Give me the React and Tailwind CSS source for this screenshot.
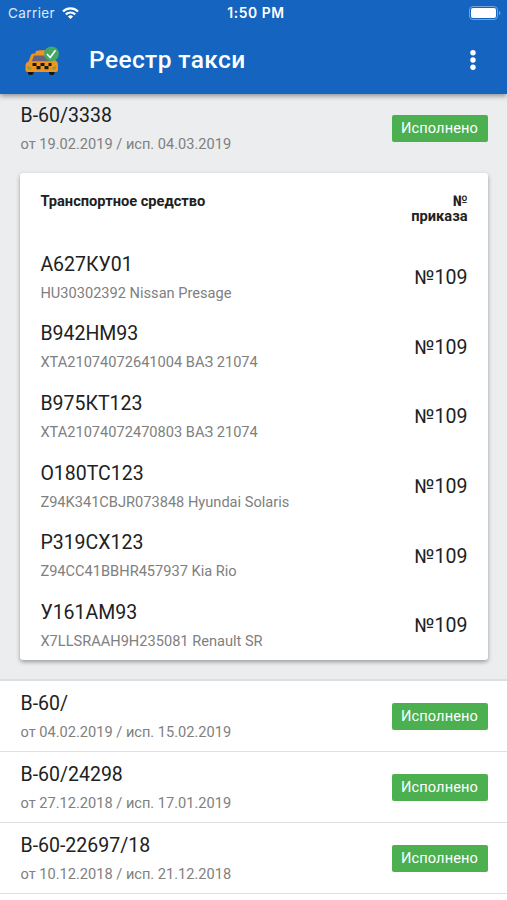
const vehicles = [
  ["А627КУ01", "HU30302392 Nissan Presage"],
  ["В942НМ93", "XTA21074072641004 ВАЗ 21074"],
  ["В975КТ123", "XTA21074072470803 ВАЗ 21074"],
  ["О180ТС123", "Z94K341CBJR073848 Hyundai Solaris"],
  ["Р319СХ123", "Z94CC41BBHR457937 Kia Rio"],
  ["У161АМ93", "X7LLSRAAH9H235081 Renault SR"],
];

const requests = [
  ["В-60/", "от 04.02.2019 / исп. 15.02.2019"],
  ["В-60/24298", "от 27.12.2018 / исп. 17.01.2019"],
  ["В-60-22697/18", "от 10.12.2018 / исп. 21.12.2018"],
];

function TaxiLogo() {
  return (
    <svg className="h-[30px] w-[36px]" viewBox="0 0 36 30">
      <path d="M3 23h5.500v4q0 2-2 2H5q-2 0-2-2zM24 23h5.500v4q0 2-2 2H26q-2 0-2-2z" fill="#151515" />
      <path d="M10.500 7.500V6q0-1 1-1l3-.8h5l3 .8q1 0 1 1v1.500l4 1 3 6q2.500 1 2.500 4v5.500q0 2-2 2H2.500q-2 0-2-2v-4.500q0-3 3-4l2.500-6.500q.5-1.500 2-1.500z" fill="#ef9420" />
      <path d="M9 9.500h15l3 5.800H6.800z" fill="#66647a" />
      <path d="M7.500 17h4v3h-4zm8 0h4v3h-4zm8 0h3v3h-3zM11.500 20h4v3.200h-4zm8 0h4v3.200h-4z" fill="#191817" />
      <path d="M2.500 20l4 1.500v2H3.500q-1.500 0-1-3.500zM31 20l-4 1.500v2h3q1.500 0 1-3.500z" fill="#8aa040" />
      <circle cx="26.500" cy="7.800" r="7.400" fill="#43a866" />
      <path d="M22 8l3.200 3.500 5.300-7.200" fill="none" stroke="#fff" strokeWidth="1.600" />
    </svg>
  );
}

function Badge() {
  return (
    <span className="flex h-[27px] w-24 items-center justify-center rounded-[2px] bg-[#4caf50] pt-px text-[14.600px] tracking-[0.1px] text-white">
      Исполнено
    </span>
  );
}

function RequestRow({ title, dates }) {
  return (
    <div className="flex h-full items-center justify-between pr-[19.500px] pl-[20.500px]">
      <div className="pt-[3px]">
        <div className="text-[19.500px] leading-7 text-[#212121]">{title}</div>
        <div className="text-[14.600px] leading-7 text-[#808080]">{dates}</div>
      </div>
      <Badge />
    </div>
  );
}

export default function App() {
  return (
    <div className="flex h-[900px] w-[507px] flex-col overflow-hidden bg-white font-[Roboto,sans-serif]">
      <header className="relative z-10 h-[94px] shrink-0 bg-[#1565c0] text-white shadow-[0_2px_5px_rgba(0,0,0,0.4)]">
        <div className="grid h-[27px] grid-cols-3 items-center pr-[6px] pl-2 font-[Inter,sans-serif]">
          <div className="flex items-center gap-[7px] text-[13.500px] tracking-[0.400px] text-[#dce9fa]">
            Carrier
            <svg className="mb-px h-3 w-[17px]" viewBox="0 0 17 12">
              <g fill="none" stroke="#fff" strokeWidth="2.200">
                <path d="M1 4.500a10.700 10.700 0 0 1 15 0" />
                <path d="M3.800 7.400a6.800 6.800 0 0 1 9.400 0" />
              </g>
              <path d="M8.500 12L5.900 9.400a3.800 3.800 0 0 1 5.200 0z" fill="#fff" />
            </svg>
          </div>
          <div className="pl-[3px] text-center text-[13.800px] font-semibold tracking-[0.600px]">1:50 PM</div>
          <svg className="mb-px h-[14px] w-[32px] justify-self-end" viewBox="0 0 32 14">
            <rect x=".5" y=".5" width="28" height="13" rx="3.500" fill="none" stroke="#73a3d9" />
            <rect x="2" y="2" width="25" height="10" rx="2" fill="#fff" />
            <path d="M30 5q1.500.5 1.500 2T30 9z" fill="#73a3d9" />
          </svg>
        </div>
        <div className="flex h-[67px] items-center pr-[27px] pl-[25px]">
          <TaxiLogo />
          <h1 className="ml-7 flex-1 text-[24.500px] font-medium tracking-[0.400px]">Реестр такси</h1>
          <svg className="mb-[2px] h-5 w-[14px]" viewBox="0 0 14 20" fill="#fff">
            <circle cx="7" cy="2.700" r="2.700" />
            <circle cx="7" cy="10" r="2.700" />
            <circle cx="7" cy="17.300" r="2.700" />
          </svg>
        </div>
      </header>

      <section className="h-[587px] shrink-0 border-b-2 border-[#dcdddd] bg-[#ecedef]">
        <div className="h-[69px]">
          <RequestRow title="В-60/3338" dates="от 19.02.2019 / исп. 04.03.2019" />
        </div>
        <div className="mr-[19.500px] ml-[20.400px] mt-[10px] h-[487px] rounded-[3px] bg-white px-5 shadow-[0_2px_4px_rgba(0,0,0,0.35)]">
          <div className="flex h-[70px] items-start justify-between pt-[21px] text-[14.650px] leading-[15px] font-bold text-[#212121]">
            <div>Транспортное средство</div>
            <div className="text-right">
              №<br />приказа
            </div>
          </div>
          {vehicles.map(([plate, info]) => (
            <div key={plate} className="flex h-[69.600px] items-center justify-between">
              <div className="pt-[3px]">
                <div className="text-[19.500px] leading-7 text-[#212121]">{plate}</div>
                <div className="text-[14.620px] leading-[29px] text-[#808080]">{info}</div>
              </div>
              <div className="text-[19.500px] text-[#212121]">№109</div>
            </div>
          ))}
        </div>
      </section>

      {requests.map(([title, dates]) => (
        <div key={title} className="h-[71px] shrink-0 border-b border-[#dfdfdf]">
          <RequestRow title={title} dates={dates} />
        </div>
      ))}
    </div>
  );
}
